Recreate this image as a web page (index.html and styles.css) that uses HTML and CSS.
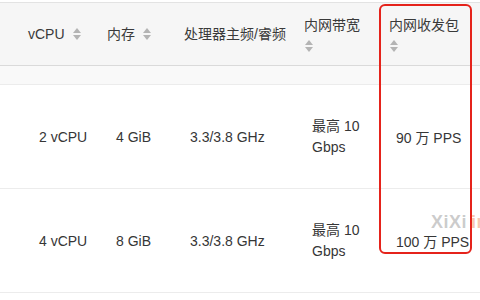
FILE: index.html
```html
<!DOCTYPE html>
<html lang="zh-CN">
<head>
<meta charset="utf-8">
<title>实例规格</title>
<link rel="stylesheet" href="styles.css">
</head>
<body>
<div class="page">
  <div class="spec-table">
    <div class="row head">
      <div class="cell"></div>
      <div class="cell th">vCPU<span class="sort"></span></div>
      <div class="cell th">内存<span class="sort"></span></div>
      <div class="cell th">处理器主频/睿频</div>
      <div class="cell th th--stack">内网带宽<span class="sort"></span></div>
      <div class="cell th th--stack">内网收发包<span class="sort"></span></div>
    </div>
    <div class="row filter"></div>
    <div class="row body">
      <div class="cell"></div>
      <div class="cell td td--cpu">2 vCPU</div>
      <div class="cell td td--mem">4 GiB</div>
      <div class="cell td td--freq">3.3/3.8 GHz</div>
      <div class="cell td td--bw"><span class="wrap">最高 10 Gbps</span></div>
      <div class="cell td td--pps">90 万 PPS</div>
    </div>
    <div class="row body">
      <div class="cell"></div>
      <div class="cell td td--cpu">4 vCPU</div>
      <div class="cell td td--mem">8 GiB</div>
      <div class="cell td td--freq">3.3/3.8 GHz</div>
      <div class="cell td td--bw"><span class="wrap">最高 10 Gbps</span></div>
      <div class="cell td td--pps">100 万 PPS</div>
    </div>
  </div>
  <div class="watermark">XiXi<span class="wm-tail">in</span></div>
  <div class="highlight"></div>
</div>
</body>
</html>
```

FILE: styles.css
```css
* { box-sizing: border-box; }

html, body {
  margin: 0;
  background: #ffffff;
}

body {
  width: 480px;
  height: 300px;
  overflow: hidden;
  font-family: "Liberation Sans", "Noto Sans CJK SC", sans-serif;
  font-size: 14px;
  color: #333333;
}

.page {
  position: relative;
  width: 480px;
  height: 300px;
  padding-top: 2px;
}

.spec-table {
  border-top: 1px solid #e3e3e3;
}

.row {
  display: grid;
  grid-template-columns: 28px 79px 77px 120px 85px 91px;
}

.head {
  height: 63px;
  background: #f6f6f6;
  border-bottom: 1px solid #dadada;
}

.filter {
  height: 19px;
  background: #f9f9f9;
  border-bottom: 1px solid #ececec;
}

.body {
  height: 104px;
  border-bottom: 1px solid #ececec;
}

.cell {
  display: flex;
  align-items: center;
  white-space: nowrap;
}

.th {
  color: #3a3a3a;
  line-height: 20px;
  padding-bottom: 1px;
}

.th--stack {
  flex-direction: column;
  align-items: flex-start;
  justify-content: center;
}

.th--stack .sort {
  margin: 5px 0 0 1px;
}

.sort {
  display: inline-flex;
  flex-direction: column;
  gap: 2px;
  margin-left: 8px;
}

.sort::before,
.sort::after {
  content: "";
  width: 0;
  height: 0;
  border-left: 4px solid transparent;
  border-right: 4px solid transparent;
}

.sort::before {
  border-bottom: 5px solid #b4b4b4;
}

.sort::after {
  border-top: 5px solid #b4b4b4;
}

.td {
  color: #363636;
}

.td--cpu { padding-left: 11px; }
.td--mem { padding-left: 9px; }
.td--freq { padding-left: 6px; }
.td--bw { padding-left: 8px; }
.td--pps { padding-left: 7px; }

.wrap {
  white-space: normal;
  width: 52px;
  line-height: 21px;
}

.highlight {
  position: absolute;
  left: 379px;
  top: 4px;
  width: 93px;
  height: 250px;
  border: 2px solid #e5231b;
  border-radius: 6px;
}

.watermark {
  position: absolute;
  left: 431px;
  top: 212px;
  font-family: "Liberation Sans", sans-serif;
  font-weight: bold;
  font-size: 18px;
  letter-spacing: 0.5px;
  color: rgba(160, 160, 160, 0.55);
  white-space: nowrap;
}

.wm-tail {
  margin-left: 4px;
  color: rgba(240, 150, 110, 0.55);
}
```
